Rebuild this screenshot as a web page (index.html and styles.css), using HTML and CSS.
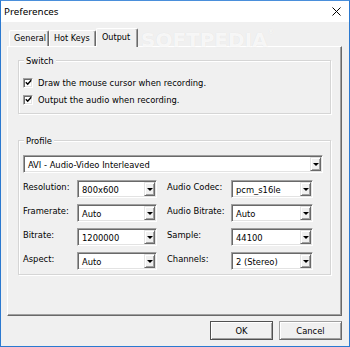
FILE: index.html
```html
<!DOCTYPE html>
<html>
<head>
<meta charset="utf-8">
<link rel="stylesheet" href="styles.css">
</head>
<body>
<div class="window">
  <div class="titlebar">
    <span class="title">Preferences</span>
    <svg class="close" width="9" height="9" viewBox="0 0 9 9"><path d="M0.5 0.5 L8.5 8.5 M8.5 0.5 L0.5 8.5" stroke="#000" stroke-width="1"/></svg>
  </div>
  <div class="body">
    <div class="tabs">
      <div class="tab">General</div>
      <div class="tab">Hot Keys</div>
      <div class="tab active">Output</div>
    </div>
    <div class="panel">
      <div class="group switch">
        <div class="group-title">Switch</div>
        <div class="check"><span class="box"><svg width="7" height="7" viewBox="0 0 7 7"><path d="M0.8 3.2 L2.7 5.2 L6.2 1.2" fill="none" stroke="#000" stroke-width="1.5"/></svg></span>Draw the mouse cursor when recording.</div>
        <div class="check"><span class="box"><svg width="7" height="7" viewBox="0 0 7 7"><path d="M0.8 3.2 L2.7 5.2 L6.2 1.2" fill="none" stroke="#000" stroke-width="1.5"/></svg></span>Output the audio when recording.</div>
      </div>
      <div class="group profile">
        <div class="group-title">Profile</div>
        <div class="combo wide"><span class="val">AVI - Audio-Video Interleaved</span><span class="drop"><i></i></span></div>
        <div class="grid">
          <span class="lbl">Resolution:</span>
          <div class="combo"><span class="val">800x600</span><span class="drop"><i></i></span></div>
          <span class="gap"></span>
          <span class="lbl">Audio Codec:</span>
          <div class="combo"><span class="val">pcm_s16le</span><span class="drop"><i></i></span></div>

          <span class="lbl">Framerate:</span>
          <div class="combo"><span class="val">Auto</span><span class="drop"><i></i></span></div>
          <span class="gap"></span>
          <span class="lbl">Audio Bitrate:</span>
          <div class="combo"><span class="val">Auto</span><span class="drop"><i></i></span></div>

          <span class="lbl">Bitrate:</span>
          <div class="combo"><span class="val">1200000</span><span class="drop"><i></i></span></div>
          <span class="gap"></span>
          <span class="lbl">Sample:</span>
          <div class="combo"><span class="val">44100</span><span class="drop"><i></i></span></div>

          <span class="lbl">Aspect:</span>
          <div class="combo"><span class="val">Auto</span><span class="drop"><i></i></span></div>
          <span class="gap"></span>
          <span class="lbl">Channels:</span>
          <div class="combo"><span class="val">2 (Stereo)</span><span class="drop"><i></i></span></div>
        </div>
      </div>
    </div>
    <div class="buttons">
      <button class="btn default">OK</button>
      <button class="btn">Cancel</button>
    </div>
  </div>
  <div class="watermark">SOFTPEDIA<span class="reg">®</span></div>
</div>
</body>
</html>
```
FILE: styles.css
```css
html, body {
  margin: 0;
  padding: 0;
}
body {
  width: 350px;
  height: 347px;
  background: #f0f0f0;
  font-family: "DejaVu Sans Condensed", "DejaVu Sans", sans-serif;
  font-stretch: condensed;
  font-size: 9.3px;
  color: #000;
}
.window {
  position: relative;
  box-sizing: border-box;
  width: 350px;
  height: 347px;
  border: 1px solid #2b79d0;
  border-top-color: #4a8fdb;
  display: flex;
  flex-direction: column;
  overflow: hidden;
}
.titlebar {
  height: 21px;
  background: #fff;
  display: flex;
  align-items: center;
  justify-content: space-between;
  padding: 0 8px 0 3px;
  flex: none;
}
.title {
  font-family: "Noto Sans", "Open Sans", sans-serif;
  font-stretch: normal;
  font-size: 9.8px;
  color: #000;
}
.close {
  display: block;
}
.body {
  flex: 1;
  display: flex;
  flex-direction: column;
  padding: 6px 7px 6px 6px;
  background: #f0f0f0;
}
.tabs {
  height: 18px;
  display: flex;
  align-items: flex-end;
  padding-left: 2px;
  position: relative;
  z-index: 1;
}
.tab {
  box-sizing: border-box;
  height: 16px;
  line-height: 14px;
  padding: 0 0 0 4px;
  font-size: 9px;
  border-top: 1px solid #fff;
  border-left: 1px solid #fff;
  border-right: 1px solid #696969;
  border-radius: 2px 2px 0 0;
  box-shadow: inset -1px 0 0 #a0a0a0;
  background: #f0f0f0;
  white-space: nowrap;
}
.tab:nth-child(1) { width: 40px; }
.tab:nth-child(2) { width: 47px; }
.tab.active {
  width: 42px;
  height: 19px;
  margin-bottom: -1px;
  line-height: 16px;
  padding-left: 5px;
}
.panel {
  box-sizing: border-box;
  height: 270px;
  border: 1px solid;
  border-color: #fff #696969 #696969 #fff;
  box-shadow: inset -1px -1px 0 #a0a0a0;
  padding: 13px 10px 0 10px;
  display: flex;
  flex-direction: column;
}
.group {
  border: 1px solid #d5d5d5;
  box-shadow: inset 1px 1px 0 #fff, 1px 1px 0 #fff;
  padding: 0 6px 0 4px;
}
.group-title {
  width: fit-content;
  margin: -6px 0 0 1px;
  padding: 0 2px 0 2px;
  line-height: 12px;
  height: 12px;
  background: #f0f0f0;
}
.switch {
  height: 52px;
}
.switch .group-title {
  margin-bottom: 7px;
}
.check {
  height: 17px;
  display: flex;
  align-items: center;
}
.box {
  box-sizing: border-box;
  width: 10px;
  height: 10px;
  flex: none;
  margin-right: 5px;
  background: #fff;
  border: 1px solid;
  border-color: #a0a0a0 #fff #fff #a0a0a0;
  box-shadow: inset 1px 1px 0 #696969, inset -1px -1px 0 #e3e3e3;
  display: flex;
  align-items: center;
  justify-content: center;
}
.box svg {
  display: block;
}
.profile {
  margin-top: 26px;
  height: 133px;
}
.profile .group-title {
  margin-bottom: 8px;
}
.combo {
  box-sizing: border-box;
  height: 18px;
  background: #fff;
  border: 1px solid;
  border-color: #a0a0a0 #fff #fff #a0a0a0;
  box-shadow: inset 1px 1px 0 #696969, inset -1px -1px 0 #e3e3e3;
  display: flex;
  align-items: stretch;
  padding: 1px;
}
.combo.wide {
  width: 300px;
}
.val {
  flex: 1;
  padding-left: 3px;
  display: flex;
  align-items: center;
  white-space: nowrap;
  overflow: hidden;
}
.drop {
  box-sizing: border-box;
  width: 11px;
  flex: none;
  background: #f0f0f0;
  border: 1px solid;
  border-color: #e3e3e3 #696969 #696969 #e3e3e3;
  box-shadow: inset 1px 1px 0 #fff, inset -1px -1px 0 #a0a0a0;
  display: flex;
  align-items: center;
  justify-content: center;
}
.drop i {
  display: block;
  width: 0;
  height: 0;
  border-left: 3px solid transparent;
  border-right: 3px solid transparent;
  border-top: 3px solid #000;
  margin-top: 1px;
}
.grid {
  margin-top: 7px;
  display: grid;
  grid-template-columns: 54px 80px 10px 64px 82px;
  grid-auto-rows: 18px;
  row-gap: 6px;
}
.lbl {
  padding-top: 1px;
  line-height: 12px;
  white-space: nowrap;
}
.buttons {
  margin-top: 5px;
  display: flex;
  justify-content: flex-end;
  gap: 6px;
}
.btn {
  box-sizing: border-box;
  width: 63px;
  height: 19px;
  margin: 0;
  padding: 0;
  font: inherit;
  font-stretch: condensed;
  color: #000;
  background: #f0f0f0;
  border: 1px solid;
  border-color: #a0a0a0 #696969 #696969 #a0a0a0;
  box-shadow: inset 1px 1px 0 #fff, inset -1px -1px 0 #a0a0a0;
}
.btn.default {
  border-color: #505050;
}
.watermark {
  position: absolute;
  left: 140px;
  top: 27px;
  font-family: "DejaVu Sans", sans-serif;
  font-stretch: normal;
  font-weight: bold;
  font-size: 20px;
  color: rgba(255, 255, 255, 0.75);
  text-shadow: 0 0 1px rgba(0, 0, 0, 0.08);
  pointer-events: none;
  z-index: 3;
}
.watermark .reg {
  font-size: 7px;
  vertical-align: top;
}
```
